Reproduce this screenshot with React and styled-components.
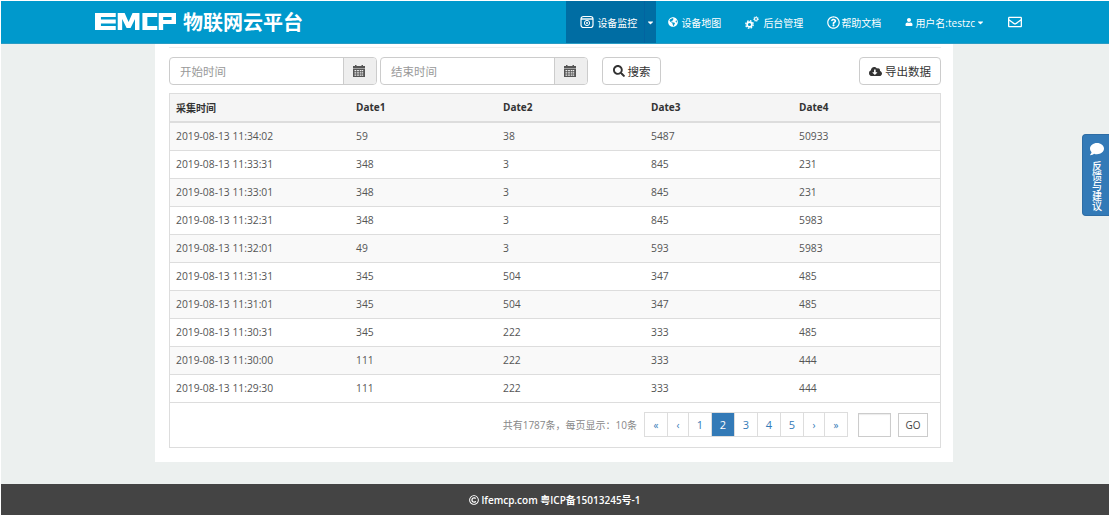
import React from 'react'
import styled, { createGlobalStyle } from 'styled-components'
import {
  FaSearch, FaCloudDownloadAlt, FaGlobeAmericas, FaRegQuestionCircle,
  FaUser, FaRegEnvelope, FaComment, FaCaretDown, FaRegCopyright,
} from 'react-icons/fa'

const FONT = '"Open Sans", "Noto Sans CJK SC", sans-serif'

const Global = createGlobalStyle`
  html, body { margin: 0; padding: 0; background: #fff; }
  body { font-family: ${FONT}; font-size: 11px; color: #555; }
  * { box-sizing: border-box; }
`

const Page = styled.div`
  height: 519px;
  width: 1112px;
  padding: 1px 3px 4px 1px;
  background: #fff;
  overflow: hidden;
  position: relative;
`

const Shell = styled.div`
  height: 100%;
  background: #ecf0ef;
  display: flex;
  flex-direction: column;
`

const Header = styled.header`
  height: 43px;
  flex: none;
  background: #0099cc;
  display: flex;
  align-items: stretch;
  padding-left: 94px;
  border-bottom: 1px solid #2a9cc4;
`

const Brand = styled.div`
  display: flex;
  align-items: center;
  gap: 7px;
  color: #fff;
  font-size: 20px;
  font-weight: 700;
  flex: 1;
  padding-bottom: 1px;
`

const Nav = styled.nav`
  display: flex;
  align-items: stretch;
  padding-right: 75px;
`

const NavItem = styled.a`
  display: flex;
  align-items: center;
  gap: ${p => p.$gap || 3}px;
  color: #fff;
  font-size: 10px;
  padding: ${p => p.$pad || '0 12px'};
  background: ${p => (p.$active ? '#006da3' : 'transparent')};
  svg { flex: none; }
`

const Caret = styled.span`
  display: flex;
  align-items: center;
  justify-content: center;
  align-self: stretch;
  width: 12px;
  color: #fff;
  background: #006da3;
  border-left: 1px solid #0264a0;
`

const Main = styled.main`
  width: 798px;
  height: 418px;
  margin-left: 154px;
  background: #fff;
  padding: 3px 12px 0 14px;
  flex: none;
`

const Rule = styled.div`
  height: 1px;
  background: #eee;
`

const Toolbar = styled.div`
  display: flex;
  align-items: center;
  margin-top: 9px;
  height: 28px;
`

const InputGroup = styled.div`
  display: flex;
  width: ${p => p.$w}px;
  height: 28px;
  margin-right: ${p => p.$mr}px;
  border: 1px solid #ccc;
  border-radius: 4px;
  overflow: hidden;
`

const DateInput = styled.div`
  flex: 1;
  padding-left: 10px;
  display: flex;
  align-items: center;
  color: #999;
  font-size: 11.500px;
`

const Addon = styled.div`
  width: 33px;
  padding-right: 2px;
  background: #eee;
  border-left: 1px solid #ccc;
  display: flex;
  align-items: center;
  justify-content: center;
  color: #555;
`

const Button = styled.button`
  height: 28px;
  border: 1px solid #ccc;
  border-radius: 4px;
  background: #fff;
  color: #333;
  font-family: ${FONT};
  font-size: 11.500px;
  display: flex;
  align-items: center;
  justify-content: center;
  gap: 3px;
  padding: 0;
  width: ${p => p.$w}px;
  margin-left: ${p => p.$ml || 0};
`

const Frame = styled.div`
  margin-top: 8px;
  border: 1px solid #ddd;
`

const Table = styled.table`
  width: 100%;
  border-collapse: collapse;
  table-layout: fixed;
`

const Th = styled.th`
  height: 28px;
  background: #f5f5f5;
  border-bottom: 2px solid #ddd;
  text-align: left;
  padding: 0 6px 1px;
  color: #333;
  font-size: 10px;
  font-weight: 700;
  width: ${p => (p.$w ? `${p.$w}px` : 'auto')};
`

const Row = styled.tr`
  background: ${p => (p.$odd ? '#f9f9f9' : '#fff')};
  border-bottom: 1px solid #ddd;
`

const Td = styled.td`
  height: 28px;
  padding: 0 6px;
  font-size: 10.300px;
  color: #555;
`

const Footbar = styled.div`
  height: 44px;
  display: flex;
  align-items: center;
  justify-content: flex-end;
  padding: 0 12px 0 0;
`

const Count = styled.span`
  color: #888;
  font-size: 10px;
  margin-right: 7px;
`

const Pager = styled.ul`
  display: flex;
  list-style: none;
  margin: 0 10px 0 0;
  padding: 0;
  height: 25px;
  border: 1px solid #ddd;
`

const PageLink = styled.li`
  width: ${p => p.$w}px;
  display: flex;
  align-items: center;
  justify-content: center;
  font-size: ${p => (p.$arrow ? 10 : 11)}px;
  color: ${p => (p.$on ? '#fff' : '#337ab7')};
  background: ${p => (p.$on ? '#337ab7' : '#fff')};
  border-left: ${p => (p.$first ? 'none' : '1px solid #ddd')};
`

const GoInput = styled.div`
  width: 33px;
  height: 24px;
  border: 1px solid #ccc;
  box-shadow: inset 0 1px 1px rgba(0, 0, 0, 0.08);
  margin-right: 7px;
`

const GoButton = styled.div`
  width: 30px;
  height: 24px;
  border: 1px solid #ccc;
  display: flex;
  align-items: center;
  justify-content: center;
  color: #444;
  font-size: 10px;
`

const Footer = styled.footer`
  margin-top: 22px;
  height: 31px;
  background: #444;
  color: #fff;
  display: flex;
  align-items: center;
  justify-content: center;
  gap: 2px;
  font-size: 10px;
  font-weight: 600;
`

const Feedback = styled.div`
  position: absolute;
  left: 1082px;
  top: 134px;
  width: 27px;
  height: 82px;
  background: #337ab7;
  border-radius: 4px 0 0 4px;
  border: 1px solid #2e6da4;
  border-right: none;
  color: #fff;
  display: flex;
  flex-direction: column;
  align-items: center;
  padding: 7px 0 0 2px;
`

// one character per line, same as the narrow box on the original page
const FeedbackText = styled.span`
  display: block;
  width: 10px;
  font-size: 10px;
  line-height: 10px;
  font-weight: 500;
  word-break: break-all;
  margin-top: 5px;
`

// bootstrap style calendar glyph
const Calendar = () => (
  <svg width="12" height="12" viewBox="0 0 12 12" fill="currentColor">
    <rect x="2" y="0" width="1.5" height="2" />
    <rect x="8.5" y="0" width="1.5" height="2" />
    <rect x="0" y="1" width="12" height="2.500" />
    <path d="M0 4h12v8H0zM1.500 5v1.300h1.800V5zm2.600 0v1.300h1.800V5zm2.600 0v1.300h1.800V5zm2.300 0v1.300h1.200V5zM1.500 7.200v1.300h1.800V7.200zm2.600 0v1.300h1.800V7.200zm2.600 0v1.300h1.800V7.200zm2.300 0v1.300h1.200V7.200zM1.500 9.400v1.300h1.800V9.400zm2.600 0v1.300h1.800V9.400zm2.600 0v1.300h1.800V9.400zm2.300 0v1.300h1.200V9.400z" fillRule="evenodd" />
  </svg>
)

const Monitor = () => (
  <svg width="14" height="14" viewBox="0 0 14 14" fill="none" stroke="#fff">
    <rect x="1" y="1.500" width="12" height="11" rx="2.500" strokeWidth="1.200" />
    <path d="M1 4h12" strokeWidth="1.400" />
    <circle cx="7" cy="8" r="2.600" strokeWidth="1" />
    <circle cx="7" cy="8" r="1" fill="#fff" stroke="none" />
  </svg>
)

const Cogs = () => (
  <svg width="14" height="13" viewBox="0 0 14 13" fill="none" stroke="#fff">
    <circle cx="4.500" cy="8.500" r="2.400" strokeWidth="1.700" />
    <circle cx="4.500" cy="8.500" r="3.700" strokeWidth="1.400" strokeDasharray="1.600 1.300" />
    <circle cx="11" cy="3" r="1.500" strokeWidth="1.200" />
    <circle cx="11" cy="3" r="2.400" strokeWidth="0.900" strokeDasharray="1 1" />
  </svg>
)

const Logo = () => (
  <svg width="81" height="17" viewBox="0 0 82 17" fill="#fff">
    <path d="M0 0h21v4H6v2.500h15v4H6V13h15v4H0z" />
    <path d="M23 0h7l4 9 4-9h7v17h-4.500V6l-4.500 9h-4L27.500 6v11H23z" />
    <path d="M48 0h15v4H53v9h10v4H48z" />
    <path d="M64.500 0H82v11H69v6h-4.500zM69 4v3h8.500V4z" fillRule="evenodd" />
  </svg>
)

const rows = [
  ['2019-08-13 11:34:02', 59, 38, 5487, 50933],
  ['2019-08-13 11:33:31', 348, 3, 845, 231],
  ['2019-08-13 11:33:01', 348, 3, 845, 231],
  ['2019-08-13 11:32:31', 348, 3, 845, 5983],
  ['2019-08-13 11:32:01', 49, 3, 593, 5983],
  ['2019-08-13 11:31:31', 345, 504, 347, 485],
  ['2019-08-13 11:31:01', 345, 504, 347, 485],
  ['2019-08-13 11:30:31', 345, 222, 333, 485],
  ['2019-08-13 11:30:00', 111, 222, 333, 444],
  ['2019-08-13 11:29:30', 111, 222, 333, 444],
]

const pages = [
  ['«', 22], ['‹', 21], ['1', 23], ['2', 23], ['3', 23], ['4', 23], ['5', 23], ['›', 21], ['»', 23],
]

export default function App() {
  return (
    <Page>
      <Global />
      <Shell>
        <Header>
          <Brand><Logo />物联网云平台</Brand>
          <Nav>
            <NavItem $active $pad="0 7px 0 14px"><Monitor />设备监控</NavItem>
            <Caret><FaCaretDown size={9} /></Caret>
            <NavItem><FaGlobeAmericas size={10} />设备地图</NavItem>
            <NavItem $gap={4}><Cogs />后台管理</NavItem>
            <NavItem $gap={1}><FaRegQuestionCircle size={13} />帮助文档</NavItem>
            <NavItem $gap={2}><FaUser size={8} />用户名:testzc<FaCaretDown size={9} style={{ marginLeft: -1 }} /></NavItem>
            <NavItem $pad="0 12px 0 11px"><FaRegEnvelope size={14} /></NavItem>
          </Nav>
        </Header>
        <Main>
          <Rule />
          <Toolbar>
            <InputGroup $w={208} $mr={3}><DateInput>开始时间</DateInput><Addon><Calendar /></Addon></InputGroup>
            <InputGroup $w={208} $mr={14}><DateInput>结束时间</DateInput><Addon><Calendar /></Addon></InputGroup>
            <Button $w={59}><FaSearch size={12} />搜索</Button>
            <Button $w={82} $ml="auto"><FaCloudDownloadAlt size={13} />导出数据</Button>
          </Toolbar>
          <Frame>
            <Table>
              <thead>
                <tr>
                  <Th $w={180}>采集时间</Th>
                  <Th $w={147}>Date1</Th>
                  <Th $w={148}>Date2</Th>
                  <Th $w={148}>Date3</Th>
                  <Th>Date4</Th>
                </tr>
              </thead>
              <tbody>
                {rows.map((r, i) => (
                  <Row key={r[0]} $odd={i % 2 === 0}>
                    {r.map((c, j) => <Td key={j}>{c}</Td>)}
                  </Row>
                ))}
              </tbody>
            </Table>
            <Footbar>
              <Count>共有1787条，每页显示：10条</Count>
              <Pager>
                {pages.map(([p, w], i) => (
                  <PageLink key={p} $w={w} $first={i === 0} $on={p === '2'} $arrow={isNaN(p)}>{p}</PageLink>
                ))}
              </Pager>
              <GoInput />
              <GoButton>GO</GoButton>
            </Footbar>
          </Frame>
        </Main>
        <Footer><FaRegCopyright size={10} />lfemcp.com 粤ICP备15013245号-1</Footer>
      </Shell>
      <Feedback>
        <FaComment size={14} />
        <FeedbackText>反馈与建议</FeedbackText>
      </Feedback>
    </Page>
  )
}
